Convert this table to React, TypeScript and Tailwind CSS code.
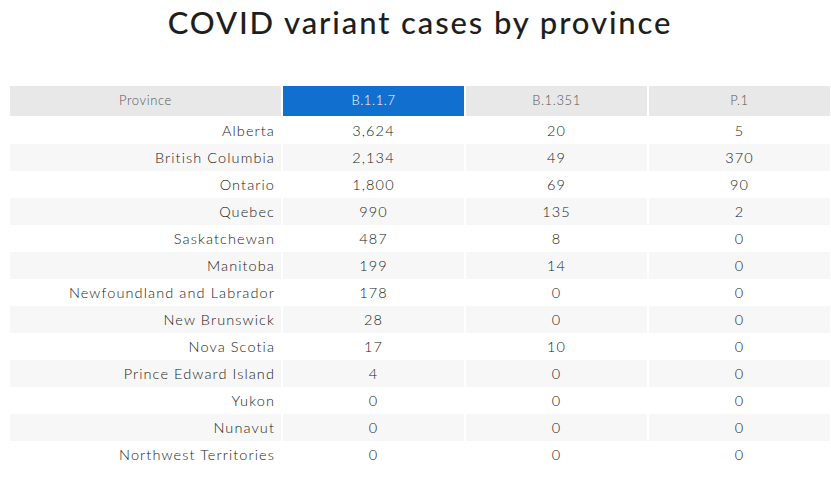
const rows: [string, string, string, string][] = [
  ["Alberta", "3,624", "20", "5"],
  ["British Columbia", "2,134", "49", "370"],
  ["Ontario", "1,800", "69", "90"],
  ["Quebec", "990", "135", "2"],
  ["Saskatchewan", "487", "8", "0"],
  ["Manitoba", "199", "14", "0"],
  ["Newfoundland and Labrador", "178", "0", "0"],
  ["New Brunswick", "28", "0", "0"],
  ["Nova Scotia", "17", "10", "0"],
  ["Prince Edward Island", "4", "0", "0"],
  ["Yukon", "0", "0", "0"],
  ["Nunavut", "0", "0", "0"],
  ["Northwest Territories", "0", "0", "0"],
];

export default function App() {
  return (
    <div className="w-[831px] h-[479px] bg-white font-['Lato',sans-serif] overflow-hidden">
      <h1 className="text-center pl-[9px] text-[31px] leading-[44px] font-medium text-[#1e1e1e] tracking-[1.9px]">
        COVID variant cases by province
      </h1>

      <div className="mt-[42px] ml-[10px]">
        {/* Header */}
        <div className="grid grid-cols-[271px_181px_181px_181px] gap-x-[2px] h-[30px] text-[13px] font-light tracking-[0.6px]">
          <div className="bg-[#e8e8e8] text-[#555] flex items-center justify-center">Province</div>
          <div className="bg-[#1170cf] text-white flex items-center justify-center">B.1.1.7</div>
          <div className="bg-[#e8e8e8] text-[#555] flex items-center justify-center">B.1.351</div>
          <div className="bg-[#e8e8e8] text-[#555] flex items-center justify-center">P.1</div>
        </div>

        {/* Body */}
        <div className="mt-px">
          {rows.map(([name, a, b, c], i) => {
            const bg = i % 2 === 1 ? "bg-[#f7f7f7]" : "bg-white";
            return (
              <div
                key={name}
                className="grid grid-cols-[271px_181px_181px_181px] gap-x-[2px] h-[27px] text-[14.5px] font-light text-[#222] tracking-[1.1px]"
              >
                <div className={`${bg} flex items-center justify-end pr-[6px]`}>{name}</div>
                <div className={`${bg} flex items-center justify-center`}>{a}</div>
                <div className={`${bg} flex items-center justify-center`}>{b}</div>
                <div className={`${bg} flex items-center justify-center`}>{c}</div>
              </div>
            );
          })}
        </div>
      </div>
    </div>
  );
}
